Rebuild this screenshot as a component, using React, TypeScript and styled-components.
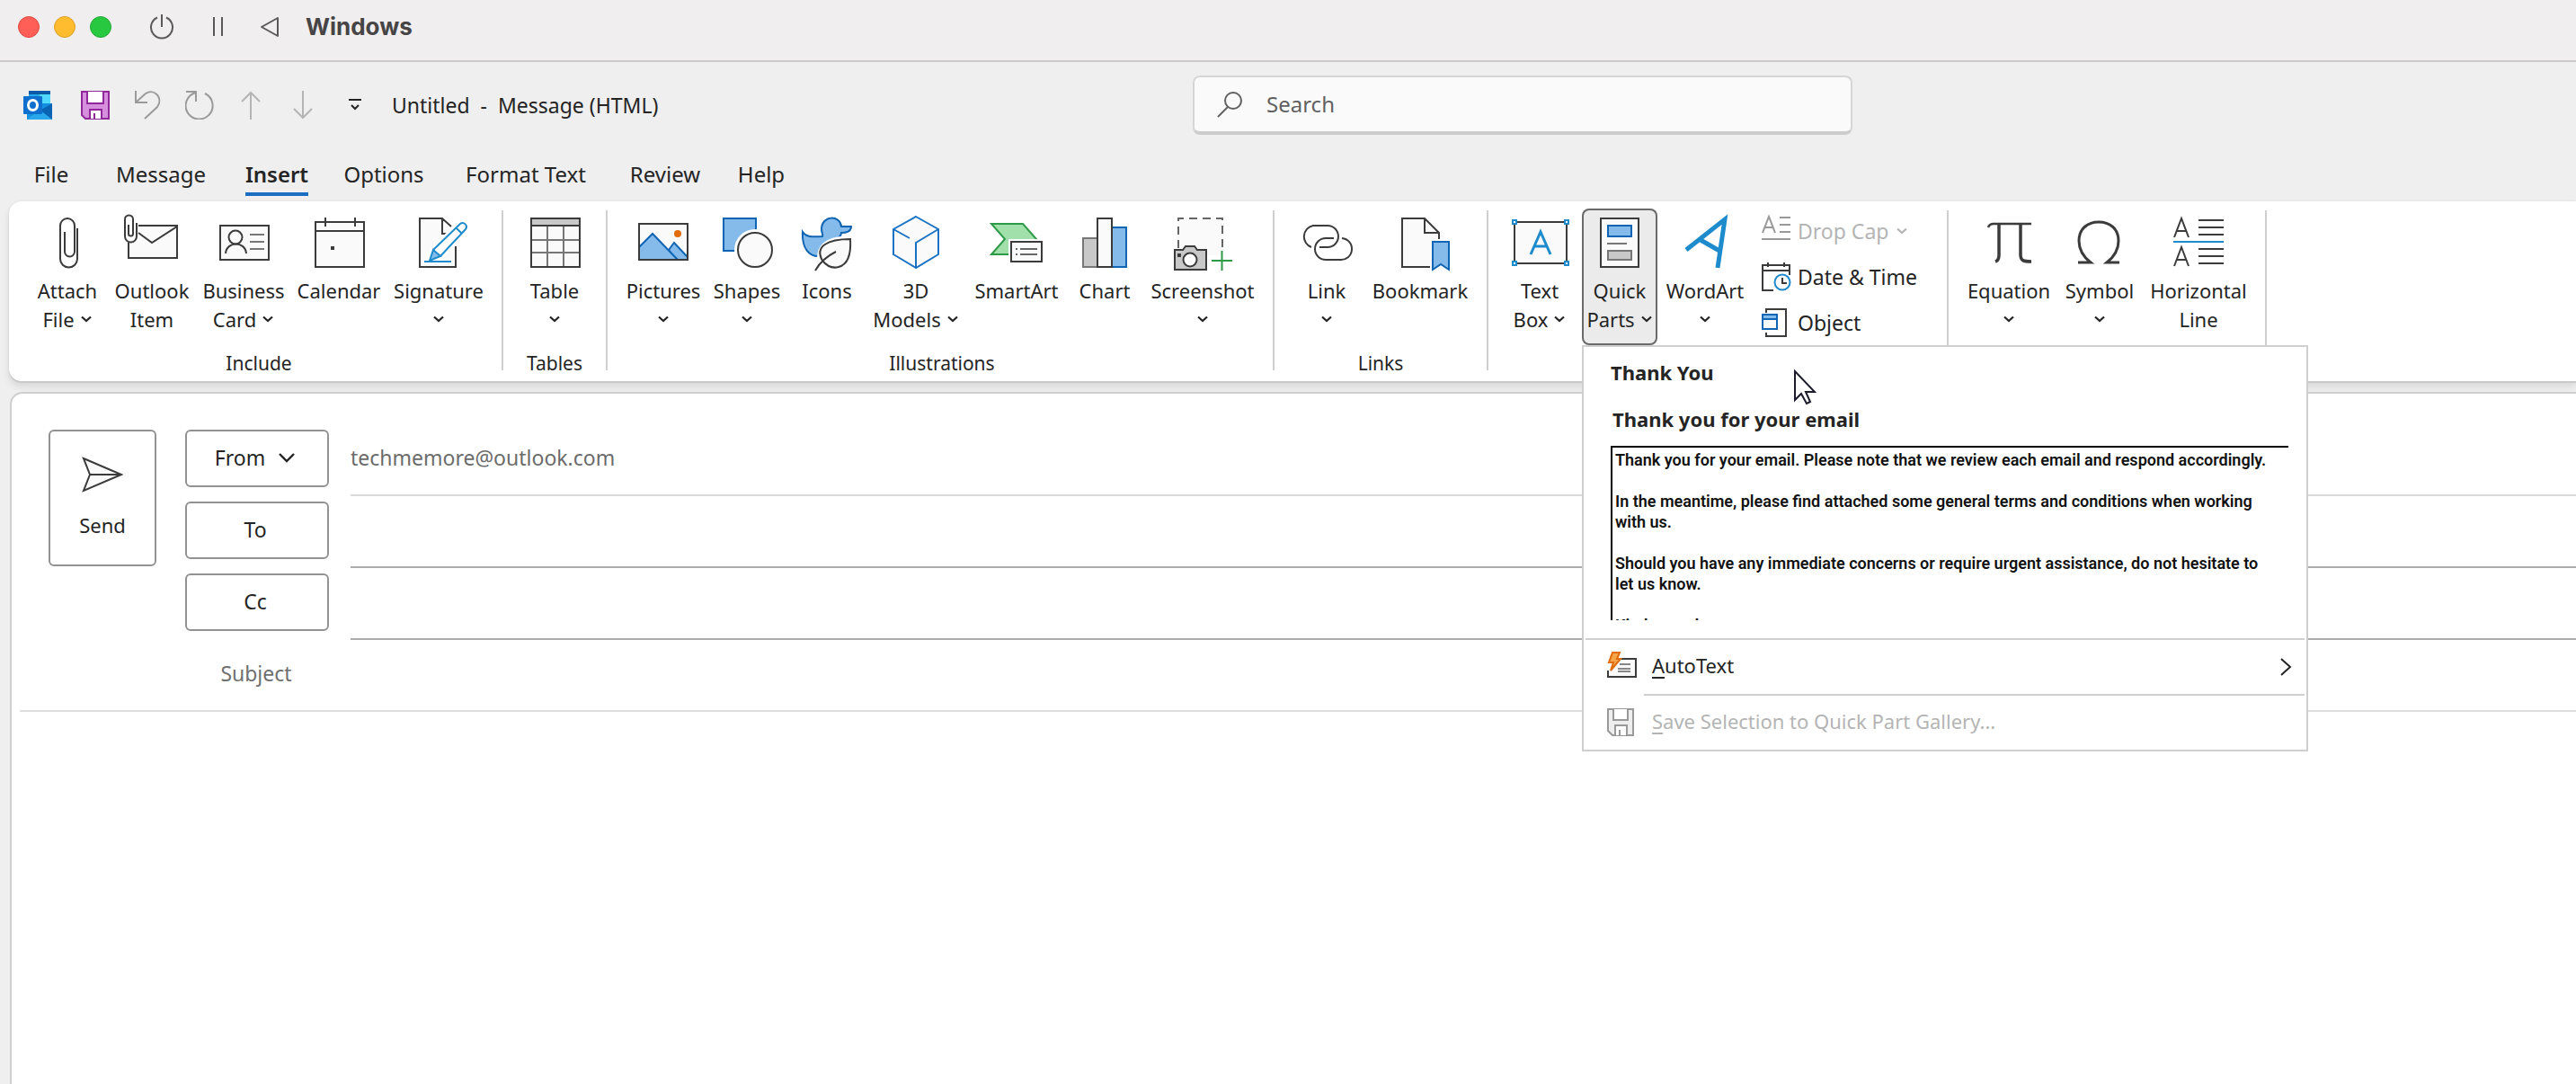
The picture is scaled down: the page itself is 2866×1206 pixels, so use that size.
import React from "react";
import styled, { createGlobalStyle, css } from "styled-components";

const font = `"Noto Sans", "Open Sans", sans-serif`;
const ink = "#242424";
const line = "#3b3b3b";
const paper = "#fafafa";
const rule = "#cfcfcf";
const blue = "#1e8bcd";
const deepBlue = "#0f64b4";
const lightBlue = "#84bbea";

const GlobalStyle = createGlobalStyle`
  *, *::before, *::after { box-sizing: border-box; }
  body { margin: 0; background: #efefef; color: ${ink}; font-family: ${font}; overflow: hidden; }
  button, input { font: inherit; color: inherit; }
  button { background: none; border: 0; padding: 0; cursor: default; }
`;

const Page = styled.div`
  min-height: 100vh;
  display: flex;
  flex-direction: column;
`;

/* ---------- host window bar ---------- */

const HostBar = styled.header`
  display: flex;
  align-items: center;
  height: 69px;
  padding: 0 20px 7px;
  background: #f0eeef;
  border-bottom: 2px solid #cccacb;
`;

const Lights = styled.div`
  display: flex;
  gap: 16px;
`;

const Light = styled.button<{ $color: string; $edge: string }>`
  width: 24px;
  height: 24px;
  border-radius: 50%;
  background: ${(p) => p.$color};
  border: 1px solid ${(p) => p.$edge};
`;

const HostTools = styled.div`
  display: flex;
  align-items: center;
  gap: 32px;
  margin-left: 42px;
`;

const HostTool = styled.button`
  display: flex;
`;

const HostTitle = styled.h1`
  margin: 0 0 0 28px;
  font: 700 26px/32px Inter, sans-serif;
  color: #464445;
`;

/* ---------- title row ---------- */

const TitleRow = styled.div`
  display: flex;
  align-items: center;
  height: 95px;
  padding-left: 26px;
`;

const QuickAccess = styled.div`
  display: flex;
  align-items: center;
  gap: 26px;
  width: 410px;
`;

const OutlookLogo = styled.svg`
  margin-right: 4px;
`;

const ToolButton = styled.button`
  display: flex;
`;

const DocTitle = styled.h2`
  margin: 0;
  width: 891px;
  font-size: 23px;
  font-weight: 400;
  line-height: 32px;
  white-space: pre;
`;

const SearchBox = styled.label`
  display: flex;
  align-items: center;
  gap: 26px;
  width: 734px;
  height: 66px;
  padding-left: 24px;
  background: #fafafa;
  border: 2px solid #d6d6d6;
  border-bottom: 4px solid #cdcdcd;
  border-radius: 8px;
`;

const SearchInput = styled.input`
  flex: 1;
  min-width: 0;
  border: 0;
  padding: 0;
  background: none;
  outline: none;
  font-size: 24px;
  line-height: 32px;
  &::placeholder { color: #616161; opacity: 1; }
`;

/* ---------- tabs ---------- */

const Tabs = styled.nav`
  display: flex;
  height: 60px;
  padding: 12px 0 6px 18px;
`;

const Tab = styled.button<{ $active?: boolean; $width: number }>`
  display: flex;
  justify-content: center;
  align-items: stretch;
  width: ${(p) => p.$width}px;
  font-size: 24px;
  line-height: 36px;
  font-weight: ${(p) => (p.$active ? 600 : 400)};
`;

const TabText = styled.span<{ $active?: boolean }>`
  white-space: nowrap;
  border-bottom: 4px solid ${(p) => (p.$active ? "#1b6ec2" : "transparent")};
`;

/* ---------- ribbon ---------- */

const Ribbon = styled.section`
  position: relative;
  z-index: 1;
  display: flex;
  margin-left: 10px;
  height: 200px;
  background: #fff;
  border-radius: 14px 0 0 14px;
  box-shadow: 0 2px 1px #c8c8c8, 0 0 3px #dcdcdc, 0 6px 8px rgba(0, 0, 0, 0.1);
`;

const Group = styled.div<{ $left: number; $right: number }>`
  display: flex;
  flex-direction: column;
  padding: 8px ${(p) => p.$right}px 0 ${(p) => p.$left}px;
`;

const GroupRow = styled.div`
  display: flex;
  height: 152px;
`;

const GroupLabel = styled.div`
  margin-top: 6px;
  text-align: center;
  font-size: 21px;
  line-height: 28px;
`;

const Divider = styled.div`
  width: 2px;
  margin: 10px 0 12px;
  background: ${rule};
`;

const BigButton = styled.button<{ $width: number; $open?: boolean }>`
  display: flex;
  flex-direction: column;
  align-items: center;
  gap: 7px;
  width: ${(p) => p.$width}px;
  height: 152px;
  padding-top: 8px;
  font-size: 22px;
  line-height: 32px;
  ${(p) =>
    p.$open &&
    css`
      background: #ebebeb;
      border-radius: 8px;
      box-shadow: inset 0 0 0 2px #6a6a6a;
    `}
`;

const LabelLine = styled.span`
  display: flex;
  align-items: center;
  justify-content: center;
  gap: 6px;
  height: 32px;
  white-space: nowrap;
`;

const LabelStack = styled.span`
  display: flex;
  flex-direction: column;
`;

const BigIcon = styled.svg.attrs({ width: 64, height: 60, viewBox: "0 0 64 60", fill: "none", "aria-hidden": true })`
  display: block;
  flex: none;
  overflow: visible;
  stroke-width: 2;
`;

const SmallIcon = styled.svg.attrs({ width: 32, height: 32, viewBox: "0 0 32 32", fill: "none", "aria-hidden": true })`
  display: block;
  flex: none;
  overflow: visible;
  stroke-width: 2;
`;

const Stack = styled.div`
  display: flex;
  flex-direction: column;
  width: 206px;
  margin-left: 10px;
`;

const SmallButton = styled.button`
  display: flex;
  align-items: center;
  gap: 8px;
  height: 52px;
  font-size: 23px;
  line-height: 32px;
  white-space: nowrap;
  &:disabled { color: #b4b4b4; }
`;

const MenuAnchor = styled.div`
  position: relative;
  margin-left: 2px;
`;

/* ---------- quick parts menu ---------- */

const Popup = styled.div`
  position: absolute;
  top: 100%;
  left: 0;
  width: 808px;
  background: #fff;
  border: 2px solid ${rule};
`;

const Gallery = styled.div`
  padding: 12px 20px 20px 30px;
`;

const GalleryTitle = styled.h3`
  margin: 0;
  font-size: 22px;
  line-height: 32px;
  font-weight: 700;
`;

const EntryButton = styled.button`
  display: block;
  width: 100%;
  margin-top: 20px;
  text-align: left;
`;

const EntryName = styled.span`
  display: block;
  font-size: 22px;
  line-height: 32px;
  font-weight: 700;
  padding-left: 2px;
`;

const Preview = styled.span`
  display: block;
  height: 194px;
  margin-top: 14px;
  padding: 2px 0 0 3px;
  overflow: hidden;
  border-top: 2px solid #000;
  border-left: 2px solid #000;
  color: #111;
  font: 600 18px/23px Roboto, sans-serif;
`;

const PreviewLine = styled.span`
  display: block;
  min-height: 23px;
  white-space: nowrap;
`;

const MenuRow = styled.button`
  display: flex;
  align-items: center;
  width: 100%;
  padding: 0 2px 0 26px;
  font-size: 22px;
  line-height: 32px;
  text-align: left;
  &:disabled { color: #b4b4b4; }
`;

const MenuRule = styled.hr<{ $inset: number }>`
  height: 2px;
  margin: 0 2px 0 ${(p) => p.$inset}px;
  border: 0;
  background: ${rule};
`;

const MenuText = styled.span`
  flex: 1;
  padding: 12px 0 16px;
  margin-left: 18px;
`;

const MenuChevron = styled.svg`
  margin-right: 14px;
`;

const Key = styled.u`
  text-decoration-thickness: 2px;
  text-underline-offset: 4px;
`;

const Pointer = styled.svg`
  position: absolute;
  top: 25px;
  left: 233px;
`;

/* ---------- compose ---------- */

const Compose = styled.main`
  flex: 1;
  margin: 12px 0 0 11px;
  padding-top: 34px;
  background: #fff;
  border: solid ${rule};
  border-width: 2px 0 0 2px;
  border-radius: 14px 0 0 0;
`;

const Header = styled.form`
  display: grid;
  grid-template-columns: 120px 160px 1fr;
  column-gap: 32px;
  grid-auto-rows: 80px;
  padding-left: 41px;
`;

const OutlineButton = styled.button`
  display: flex;
  align-items: center;
  justify-content: center;
  gap: 14px;
  height: 64px;
  margin-top: 6px;
  padding: 0 4px 2px 0;
  font-size: 23px;
  line-height: 32px;
  border: 2px solid #929292;
  border-radius: 6px;
`;

const SendButton = styled(OutlineButton)`
  grid-row: span 2;
  flex-direction: column;
  gap: 20px;
  height: 152px;
  padding: 0;
  font-size: 22px;
`;

const Field = styled.div<{ $tone: string }>`
  display: flex;
  align-items: center;
  grid-column: 3;
  margin-left: -8px;
  padding-bottom: 4px;
  border-bottom: 2px solid ${(p) => p.$tone};
`;

const Account = styled.span`
  font-size: 23px;
  line-height: 32px;
  color: #6b6b6b;
`;

const FieldInput = styled.input`
  flex: 1;
  min-width: 0;
  height: 48px;
  border: 0;
  padding: 0;
  outline: none;
  background: none;
  font-size: 23px;
`;

const SubjectRow = styled.div`
  display: flex;
  align-items: center;
  height: 80px;
  margin-left: 9px;
  padding-bottom: 4px;
  border-bottom: 2px solid #dedede;
`;

const SubjectLabel = styled.label`
  width: 160px;
  margin-left: 183px;
  margin-right: 25px;
  text-align: center;
  font-size: 23px;
  line-height: 32px;
  color: #6f6f6f;
`;

const Cell = styled.div<{ $column: number }>`
  display: grid;
  grid-column: ${(p) => p.$column};
  align-content: start;
`;

/* ---------- icons ---------- */

const Caret = ({ color = ink }: { color?: string }) => (
  <svg width="14" height="8" viewBox="0 0 14 8" fill="none" aria-hidden="true">
    <path d="M2 1.500 7 6l5-4.500" stroke={color} strokeWidth="2.200" />
  </svg>
);

const AttachIcon = () => (
  <BigIcon stroke={line}>
    <path d="M43 14V48a9.500 9.500 0 0 1-19 0V11a8 8 0 0 1 16 0V40a5.500 5.500 0 0 1-11 0V18" />
  </BigIcon>
);

const OutlookItemIcon = () => (
  <BigIcon stroke={line}>
    <path d="M17 11H60V47H6V30" fill={paper} />
    <path d="M17 19 32 30 60 12" />
    <path d="M15 8V23a6.500 6.500 0 0 1-13 0V4a4.500 4.500 0 0 1 9 0V20a2.500 2.500 0 0 1-5 0V10" />
  </BigIcon>
);

const CardIcon = () => (
  <BigIcon stroke={line}>
    <rect x="6" y="11" width="54" height="38" fill={paper} />
    <circle cx="23" cy="24" r="7.500" />
    <path d="M12 42c1-14 22-14 23 0" />
    <path d="M39 21H55M39 29H55M39 37H55" stroke="#777" />
  </BigIcon>
);

const CalendarIcon = () => (
  <BigIcon stroke={line}>
    <rect x="6" y="7" width="54" height="50" fill={paper} />
    <path d="M6 17H60M17 2V12M50 2V12" />
    <rect x="23" y="34" width="4" height="4" fill={line} stroke="none" />
  </BigIcon>
);

const SignatureIcon = () => (
  <BigIcon stroke={line}>
    <path d="M11 3H36L51 18V57H11Z" fill={paper} stroke="none" />
    <path d="M46 12 36 3H11V57H51V34M36 3V20H42" />
    <path d="M22 50 26 38 56 9c4-3 9 2 6 6L34 45Z" fill="#fff" stroke="#fff" strokeWidth="7" />
    <path d="M22 50 26 38 34 45Z" fill={lightBlue} stroke={blue} />
    <path d="M26 38 56 9c4-3 9 2 6 6L34 45M51 13 58 20" stroke={blue} />
    <path d="M16 51H46" stroke={blue} />
  </BigIcon>
);

const TableIcon = () => (
  <BigIcon stroke={line}>
    <rect x="6" y="3" width="54" height="54" fill={paper} />
    <path d="M6 3H60V11H6Z" fill="#c8c8c8" />
    <path d="M24 12V56M42 12V56M7 27H59M7 41H59" stroke="#777" />
    <path d="M6 11V57H60V11" />
  </BigIcon>
);

const PicturesIcon = () => (
  <BigIcon stroke={line}>
    <rect x="5" y="9" width="54" height="40" fill={paper} />
    <path d="M38 38 44 30 59 46V49H46Z" fill={lightBlue} stroke={deepBlue} />
    <path d="M5 35 20 20 48 49H5Z" fill={lightBlue} stroke={deepBlue} />
    <circle cx="48" cy="20" r="4" fill="#e06c0a" stroke="none" />
    <rect x="5" y="9" width="54" height="40" />
  </BigIcon>
);

const ShapesIcon = () => (
  <BigIcon stroke={line}>
    <rect x="6" y="3" width="36" height="36" fill={lightBlue} stroke={deepBlue} />
    <circle cx="41" cy="38" r="22" fill="#fff" stroke="#fff" />
    <circle cx="41" cy="38" r="19" fill={paper} />
  </BigIcon>
);

const DuckIcon = () => (
  <BigIcon stroke={line}>
    <path
      d="M5 18c3 5 8 6 22 5 1-2-1-4-1-8 0-16 21-16 22-3h11c0 5-4 7-11 7 0 3-3 6-6 7-8 1-17 10-18 19C12 46 4 36 5 18Z"
      fill={lightBlue}
      stroke={deepBlue}
    />
    <path d="M24 54c-4-18 6-31 35-29 2 14-1 32-18 33-6 1-10-2-17-4Z" fill="#fff" stroke="#fff" strokeWidth="4" />
    <path d="M27 50c-9-16 6-24 31-24 1 16-2 28-13 31-7 2-13-1-18-7Z" fill={paper} />
    <path d="M42 40C32 45 24 52 19 61" />
  </BigIcon>
);

const CubeIcon = () => (
  <BigIcon stroke="#1a72c4">
    <path d="M32 1 57 15V43L32 58 7 43V15Z" fill={paper} />
    <path d="M32 57V30L57 15M7 15 25 25" />
  </BigIcon>
);

const SmartArtIcon = () => (
  <BigIcon stroke={line}>
    <path d="M4 9H39L54 26 41 43H4L19 26Z" fill="#a1dfab" stroke="#2d9a48" />
    <path d="M23 26H66V56H23Z" fill="#fff" stroke="none" />
    <rect x="26" y="29" width="34" height="22" fill={paper} />
    <path d="M36 37H55M36 43H55M31 37h2M31 43h2" stroke="#666" />
  </BigIcon>
);

const ChartIcon = () => (
  <BigIcon stroke={line}>
    <rect x="8" y="25" width="16" height="32" fill="#c8c8c8" stroke="#777" />
    <rect x="40" y="13" width="16" height="44" fill={lightBlue} stroke={deepBlue} />
    <rect x="24" y="3" width="16" height="54" fill={paper} />
  </BigIcon>
);

const ScreenshotIcon = () => (
  <BigIcon stroke={line}>
    <path d="M5 3H54V44H5Z" fill={paper} stroke="none" />
    <path d="M5 36V3H54V40" stroke="#666" strokeDasharray="9 6" />
    <path d="M1 38H10L13 34H23L26 38H36V60H1Z" fill="#c8c8c8" />
    <circle cx="18" cy="49" r="7.500" fill="#fff" />
    <rect x="4" y="42" width="4" height="4" fill={line} stroke="none" />
    <path d="M42 50H65M53.500 39V61" stroke="#2d9a48" />
  </BigIcon>
);

const LinkIcon = () => (
  <BigIcon stroke={line}>
    <path d="M15 35A12.500 12.500 0 0 1 17 11H33A12 12 0 0 1 33 35H24" />
    <path d="M40 25H31A12 12 0 0 0 31 49H47A12 12 0 0 0 49 25" />
  </BigIcon>
);

const BookmarkIcon = () => (
  <BigIcon stroke={line}>
    <path d="M12 3H37L53 19V57H12Z" fill={paper} stroke="none" />
    <path d="M43 57H12V3H37L53 19V26M37 3V19H53" />
    <path d="M46 29H64V60L55 54 46 60Z" fill={lightBlue} stroke={deepBlue} />
  </BigIcon>
);

const TextBoxIcon = () => (
  <BigIcon stroke={line}>
    <rect x="4" y="7" width="58" height="46" fill={paper} />
    <path d="M22 43 33 18 44 43M26 34H40" stroke={blue} strokeWidth="3" />
    {[[4, 7], [62, 7], [4, 53], [62, 53]].map(([x, y]) => (
      <rect key={`${x}-${y}`} x={x - 2} y={y - 2} width="4" height="4" fill="#fff" stroke={blue} />
    ))}
  </BigIcon>
);

const QuickPartsIcon = () => (
  <BigIcon stroke={line}>
    <rect x="11" y="3" width="42" height="54" fill={paper} />
    <rect x="19" y="11" width="26" height="12" fill={lightBlue} stroke={deepBlue} />
    <path d="M18 31H40" stroke="#777" />
    <rect x="19" y="39" width="26" height="10" fill="#c8c8c8" stroke="#777" />
  </BigIcon>
);

const WordArtIcon = () => (
  <BigIcon stroke={blue}>
    <path d="M11 38 54 4 46 58M27 27 48 39" strokeWidth="5" />
  </BigIcon>
);

const EquationIcon = () => (
  <BigIcon stroke={line}>
    <path d="M9 13c1-3 3-4 6-4H57" strokeWidth="2.500" />
    <path d="M21 9V44c0 4-1 6-4 7M45 9V43c0 7 3 8 12 8" strokeWidth="3.500" />
  </BigIcon>
);

const SymbolIcon = () => (
  <BigIcon stroke={line}>
    <path d="M8 52H22C13 45 9 37 9 28 9 14 19 7 31 7s22 7 22 21c0 9-4 17-13 24H54" strokeWidth="3" />
  </BigIcon>
);

const HorizontalIcon = () => (
  <BigIcon stroke={line}>
    <path d="M5 24 13 3 21 24M8 17H18M5 56 13 35 21 56M8 49H18" />
    <path d="M32 5H60M32 13H60M32 21H60M32 37H60M32 45H60M32 53H60" />
    <path d="M4 29H60" stroke={blue} />
  </BigIcon>
);

const DropCapIcon = () => (
  <SmallIcon stroke="#999">
    <path d="M1 18 8 0 15 18M4 12H12M20 1H32M20 9H32M20 17H32M0 25H32" />
  </SmallIcon>
);

const DateTimeIcon = () => (
  <SmallIcon stroke={line}>
    <path d="M13 31H1V3H31V14M1 9H31M7 0V5M25 0V5" />
    <circle cx="23" cy="22" r="11" fill="#fff" stroke="none" />
    <circle cx="23" cy="22" r="8.500" fill={paper} stroke={blue} />
    <path d="M23 17V23H28" />
  </SmallIcon>
);

const ObjectIcon = () => (
  <SmallIcon stroke={line}>
    <path d="M5 5V1H27V31H5V27" />
    <rect x="1" y="7" width="16" height="16" fill={paper} stroke={deepBlue} />
    <path d="M1 7H17V12H1Z" fill={lightBlue} stroke={deepBlue} />
  </SmallIcon>
);

/* ---------- pieces ---------- */

type BigProps = {
  icon: React.ReactNode;
  lines: string[];
  caret?: boolean;
  width: number;
  open?: boolean;
};

const Big = ({ icon, lines, caret, width, open }: BigProps) => (
  <BigButton type="button" $width={width} $open={open} aria-expanded={open}>
    {icon}
    <LabelStack>
      <LabelLine>{lines[0]}</LabelLine>
      {(lines[1] || caret) && (
        <LabelLine>
          {lines[1]}
          {caret && <Caret />}
        </LabelLine>
      )}
    </LabelStack>
  </BigButton>
);

const tabs = [
  { name: "File", width: 78 },
  { name: "Message", width: 166 },
  { name: "Insert", width: 92 },
  { name: "Options", width: 146 },
  { name: "Format Text", width: 170 },
  { name: "Review", width: 140 },
  { name: "Help", width: 74 },
];

const previewLines = [
  "Thank you for your email. Please note that we review each email and respond accordingly.",
  "",
  "In the meantime, please find attached some general terms and conditions when working",
  "with us.",
  "",
  "Should you have any immediate concerns or require urgent assistance, do not hesitate to",
  "let us know.",
  "",
  "Kind regards",
];

const QuickPartsMenu = () => (
  <Popup>
    <Gallery>
      <GalleryTitle>Thank You</GalleryTitle>
      <EntryButton type="button">
        <EntryName>Thank you for your email</EntryName>
        <Preview>
          {previewLines.map((text, i) => (
            <PreviewLine key={i}>{text}</PreviewLine>
          ))}
        </Preview>
      </EntryButton>
    </Gallery>
    <MenuRule $inset={2} />
    <MenuRow type="button">
      <SmallIcon stroke={line}>
        <path d="M13 7H32V27H1V20" fill={paper} />
        <path d="M14 13H26M12 18H26M12 21H26" stroke="#888" />
        <path d="M6 0H14L11 7H15L4 20 7 11H2Z" fill="#f6a64a" stroke="#e06c0a" />
      </SmallIcon>
      <MenuText>
        <Key>A</Key>utoText
      </MenuText>
      <MenuChevron width="14" height="20" viewBox="0 0 14 20" fill="none" aria-hidden="true">
        <path d="M2 1 12 10 2 19" stroke={ink} strokeWidth="2" />
      </MenuChevron>
    </MenuRow>
    <MenuRule $inset={67} />
    <MenuRow type="button" disabled>
      <SmallIcon stroke="#999">
        <path d="M1 1H29V30H6L1 25Z" fill="#eee" />
        <path d="M7 1V13H23V1M9 30V19H22V30M14 30V24" fill="#fff" />
      </SmallIcon>
      <MenuText>
        <Key>S</Key>ave Selection to Quick Part Gallery...
      </MenuText>
    </MenuRow>
    <Pointer width="26" height="40" viewBox="0 0 26 40" aria-hidden="true">
      <path d="M2 2V34L9 27 15 38 19 36 14 25H24Z" fill="#fff" stroke="#1b1b2b" strokeWidth="2" />
    </Pointer>
  </Popup>
);

export default function App() {
  return (
    <>
      <GlobalStyle />
      <Page>
        <HostBar>
          <Lights>
            <Light type="button" aria-label="Close" $color="#ff5f57" $edge="#e2483f" />
            <Light type="button" aria-label="Minimize" $color="#febc2e" $edge="#e0a028" />
            <Light type="button" aria-label="Zoom" $color="#28c840" $edge="#24a838" />
          </Lights>
          <HostTools>
            <HostTool type="button" aria-label="Power">
              <svg width="28" height="30" viewBox="0 0 28 30" fill="none" stroke="#5a5859" strokeWidth="2">
                <path d="M14 1V15M9 4.500a12 12 0 1 0 10 0" />
              </svg>
            </HostTool>
            <HostTool type="button" aria-label="Pause">
              <svg width="30" height="24" viewBox="0 0 30 24" fill="none" stroke="#5a5859" strokeWidth="2">
                <path d="M12 1V22M21 1V22" />
              </svg>
            </HostTool>
            <HostTool type="button" aria-label="Back">
              <svg width="24" height="24" viewBox="0 0 24 24" fill="none" stroke="#5a5859" strokeWidth="2">
                <path d="M21 2V22L3 12Z" strokeLinejoin="round" />
              </svg>
            </HostTool>
          </HostTools>
          <HostTitle>Windows</HostTitle>
        </HostBar>

        <TitleRow>
          <QuickAccess>
            <OutlookLogo width="34" height="32" viewBox="0 0 34 32" role="img" aria-label="Outlook">
              <path d="M6 0H30V18H6Z" fill="#28a8ea" />
              <path d="M6 0H30V4H6Z" fill="#0a5aa8" />
              <path d="M18 4H30V14H18Z" fill="#50d9ff" />
              <path d="M4 14H32V32H4Z" fill="#1490df" />
              <path d="M32 14V32L18 22Z" fill="#0a64b4" />
              <path d="M4 32 18 21 32 32Z" fill="#28a8ea" />
              <rect x="0" y="6" width="21" height="20" rx="1" fill="#0f6fce" />
              <ellipse cx="10.500" cy="16" rx="5" ry="5.500" fill="none" stroke="#fff" strokeWidth="3" />
            </OutlookLogo>
            <ToolButton type="button" aria-label="Save">
              <svg width="32" height="32" viewBox="0 0 32 32" fill="none" stroke="#92279b" strokeWidth="2">
                <path d="M1 1H31V31H5L1 27Z" fill="#d68fdc" />
                <path d="M7 1V14H25V1M10 31V21H23V31" fill="#fff" />
                <path d="M15 31V25" />
              </svg>
            </ToolButton>
            <ToolButton type="button" aria-label="Undo">
              <svg width="32" height="32" viewBox="0 0 32 32" fill="none" stroke="#9a9a9a" strokeWidth="2">
                <path d="M3 0V13H16M3 13 14 3c10-6 20 5 13 15L13 31" />
              </svg>
            </ToolButton>
            <ToolButton type="button" aria-label="Redo">
              <svg width="32" height="32" viewBox="0 0 32 32" fill="none" stroke="#9a9a9a" strokeWidth="2">
                <path d="M1 1H12V12M12 2A15 15 0 1 0 22 3" />
              </svg>
            </ToolButton>
            <ToolButton type="button" aria-label="Previous item">
              <svg width="32" height="32" viewBox="0 0 32 32" fill="none" stroke="#b4b4b4" strokeWidth="2">
                <path d="M15 32V2M5 12 15 2 25 12" />
              </svg>
            </ToolButton>
            <ToolButton type="button" aria-label="Next item">
              <svg width="32" height="32" viewBox="0 0 32 32" fill="none" stroke="#b4b4b4" strokeWidth="2">
                <path d="M15 0V30M5 20 15 30 25 20" />
              </svg>
            </ToolButton>
            <ToolButton type="button" aria-label="Customize quick access toolbar">
              <svg width="32" height="14" viewBox="0 0 32 14" fill="none" stroke={ink} strokeWidth="2">
                <path d="M8 1H22M11 7 15 11 19 7" />
              </svg>
            </ToolButton>
          </QuickAccess>
          <DocTitle>{"Untitled  -  Message (HTML)"}</DocTitle>
          <SearchBox>
            <svg width="30" height="30" viewBox="0 0 30 30" fill="none" stroke="#616161" strokeWidth="2" aria-hidden="true">
              <circle cx="19" cy="11" r="9" />
              <path d="M13 18 2 29" />
            </svg>
            <SearchInput type="search" placeholder="Search" aria-label="Search" />
          </SearchBox>
        </TitleRow>

        <Tabs>
          {tabs.map((t) => (
            <Tab key={t.name} type="button" $width={t.width} $active={t.name === "Insert"}>
              <TabText $active={t.name === "Insert"}>{t.name}</TabText>
            </Tab>
          ))}
        </Tabs>

        <Ribbon>
          <Group $left={23} $right={15}>
            <GroupRow>
              <Big icon={<AttachIcon />} lines={["Attach", "File"]} caret width={84} />
              <Big icon={<OutlookItemIcon />} lines={["Outlook", "Item"]} width={104} />
              <Big icon={<CardIcon />} lines={["Business", "Card"]} caret width={100} />
              <Big icon={<CalendarIcon />} lines={["Calendar"]} width={112} />
              <Big icon={<SignatureIcon />} lines={["Signature"]} caret width={110} />
            </GroupRow>
            <GroupLabel>Include</GroupLabel>
          </Group>
          <Divider />
          <Group $left={13} $right={13}>
            <GroupRow>
              <Big icon={<TableIcon />} lines={["Table"]} caret width={88} />
            </GroupRow>
            <GroupLabel>Tables</GroupLabel>
          </Group>
          <Divider />
          <Group $left={14} $right={10}>
            <GroupRow>
              <Big icon={<PicturesIcon />} lines={["Pictures"]} caret width={96} />
              <Big icon={<ShapesIcon />} lines={["Shapes"]} caret width={90} />
              <Big icon={<DuckIcon />} lines={["Icons"]} width={88} />
              <Big icon={<CubeIcon />} lines={["3D", "Models"]} caret width={110} />
              <Big icon={<SmartArtIcon />} lines={["SmartArt"]} width={114} />
              <Big icon={<ChartIcon />} lines={["Chart"]} width={82} />
              <Big icon={<ScreenshotIcon />} lines={["Screenshot"]} caret width={136} />
            </GroupRow>
            <GroupLabel>Illustrations</GroupLabel>
          </Group>
          <Divider />
          <Group $left={14} $right={14}>
            <GroupRow>
              <Big icon={<LinkIcon />} lines={["Link"]} caret width={88} />
              <Big icon={<BookmarkIcon />} lines={["Bookmark"]} width={120} />
            </GroupRow>
            <GroupLabel>Links</GroupLabel>
          </Group>
          <Divider />
          <Group $left={12} $right={0}>
            <GroupRow>
              <Big icon={<TextBoxIcon />} lines={["Text", "Box"]} caret width={90} />
              <MenuAnchor>
                <Big icon={<QuickPartsIcon />} lines={["Quick", "Parts"]} caret width={84} open />
                <QuickPartsMenu />
              </MenuAnchor>
              <Big icon={<WordArtIcon />} lines={["WordArt"]} caret width={106} />
              <Stack>
                <SmallButton type="button" disabled>
                  <DropCapIcon />
                  Drop Cap <Caret color="#b4b4b4" />
                </SmallButton>
                <SmallButton type="button">
                  <DateTimeIcon />
                  Date &amp; Time
                </SmallButton>
                <SmallButton type="button">
                  <ObjectIcon />
                  Object
                </SmallButton>
              </Stack>
            </GroupRow>
          </Group>
          <Divider />
          <Group $left={14} $right={12}>
            <GroupRow>
              <Big icon={<EquationIcon />} lines={["Equation"]} caret width={106} />
              <Big icon={<SymbolIcon />} lines={["Symbol"]} caret width={96} />
              <Big icon={<HorizontalIcon />} lines={["Horizontal", "Line"]} width={124} />
            </GroupRow>
          </Group>
          <Divider />
        </Ribbon>

        <Compose>
          <Header>
            <SendButton type="button">
              <svg width="46" height="40" viewBox="0 0 46 40" fill="none" stroke={line} strokeWidth="2" aria-hidden="true">
                <path d="M2 2 44 20 2 38 9 20ZM9 20H44" fill={paper} />
              </svg>
              Send
            </SendButton>
            <Cell $column={2}>
              <OutlineButton type="button">
                From
                <svg width="20" height="12" viewBox="0 0 20 12" fill="none" aria-hidden="true">
                  <path d="M2 2 10 10 18 2" stroke={ink} strokeWidth="2.400" />
                </svg>
              </OutlineButton>
            </Cell>
            <Field $tone="#dadada">
              <Account>techmemore@outlook.com</Account>
            </Field>
            <Cell $column={2}>
              <OutlineButton type="button">To</OutlineButton>
            </Cell>
            <Field $tone="#acacac">
              <FieldInput type="text" aria-label="To" />
            </Field>
            <Cell $column={2}>
              <OutlineButton type="button">Cc</OutlineButton>
            </Cell>
            <Field $tone="#acacac">
              <FieldInput type="text" aria-label="Cc" />
            </Field>
          </Header>
          <SubjectRow>
            <SubjectLabel htmlFor="subject">Subject</SubjectLabel>
            <FieldInput id="subject" type="text" />
          </SubjectRow>
        </Compose>
      </Page>
    </>
  );
}
